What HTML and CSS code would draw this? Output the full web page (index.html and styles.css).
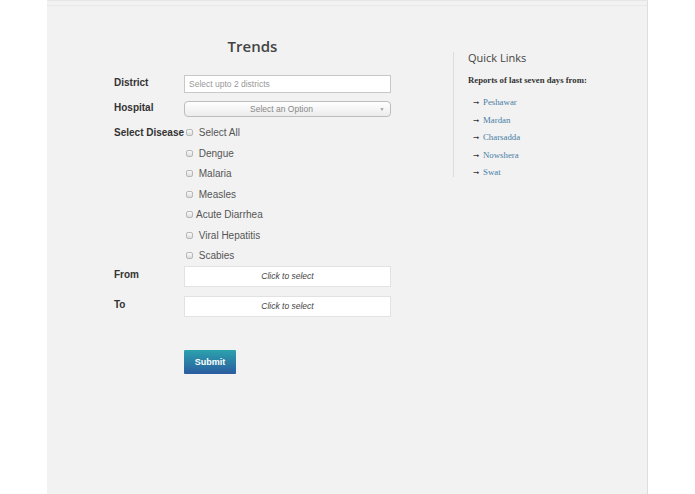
FILE: index.html
```html
<!DOCTYPE html>
<html>
<head>
<meta charset="utf-8">
<link rel="stylesheet" href="styles.css">
</head>
<body>
<div class="panel">
  <div class="panel-top"></div>
  <div class="main">
    <div class="form-col">
      <h1 class="title">Trends</h1>
      <div class="row row-district">
        <div class="lbl">District</div>
        <div class="text-input">Select upto 2 districts</div>
      </div>
      <div class="row row-hospital">
        <div class="lbl lbl-up">Hospital</div>
        <div class="select">
          <span class="select-text">Select an Option</span>
          <span class="select-arrow">&#9660;</span>
        </div>
      </div>
      <div class="row row-disease">
        <div class="lbl lbl-disease">Select Disease</div>
        <div class="options">
          <div class="opt"><span class="cb"></span> Select All</div>
          <div class="opt"><span class="cb"></span> Dengue</div>
          <div class="opt"><span class="cb"></span> Malaria</div>
          <div class="opt"><span class="cb"></span> Measles</div>
          <div class="opt"><span class="cb"></span>Acute Diarrhea</div>
          <div class="opt"><span class="cb"></span> Viral Hepatitis</div>
          <div class="opt"><span class="cb"></span> Scabies</div>
        </div>
      </div>
      <div class="row row-from">
        <div class="lbl lbl-date">From</div>
        <div class="date-input">Click to select</div>
      </div>
      <div class="row row-to">
        <div class="lbl lbl-date">To</div>
        <div class="date-input">Click to select</div>
      </div>
      <div class="submit-row">
        <button class="submit">Submit</button>
      </div>
    </div>
    <div class="links-col">
      <h2 class="links-title">Quick Links</h2>
      <p class="links-sub">Reports of last seven days from:</p>
      <ul class="links">
        <li><span class="arrow">&#10142;</span><a href="#">Peshawar</a></li>
        <li><span class="arrow">&#10142;</span><a href="#">Mardan</a></li>
        <li><span class="arrow">&#10142;</span><a href="#">Charsadda</a></li>
        <li><span class="arrow">&#10142;</span><a href="#">Nowshera</a></li>
        <li><span class="arrow">&#10142;</span><a href="#">Swat</a></li>
      </ul>
    </div>
  </div>
</div>
</body>
</html>
```

FILE: styles.css
```css
html, body {
  margin: 0;
  padding: 0;
  background: #ffffff;
}
body {
  font-family: "Liberation Sans", Arial, sans-serif;
}
.panel {
  margin-left: 47px;
  width: 601px;
  height: 494px;
  background: #f2f2f2;
  border-right: 1px solid #dedede;
  border-top: 1px solid #e6e6e6;
  box-sizing: border-box;
}
.panel-top {
  height: 4px;
  border-bottom: 1px solid #e8e8e8;
}
.main {
  display: flex;
  align-items: flex-start;
}
.form-col {
  padding-left: 67px;
  padding-top: 30px;
  width: 277px;
}
.title {
  margin: 0;
  height: 20px;
  line-height: 20px;
  text-align: center;
  font-family: "Open Sans", sans-serif;
  font-size: 15px;
  font-weight: 600;
  color: #444;
}
.row {
  display: flex;
  align-items: flex-start;
}
.lbl {
  width: 70px;
  flex: none;
  font-size: 10px;
  font-weight: bold;
  color: #333;
  line-height: 14px;
  padding-top: 1px;
  white-space: nowrap;
}
.lbl-up {
  margin-top: -1px;
}
.lbl-date {
  margin-top: 1px;
}
.row-district {
  margin-top: 19px;
}
.text-input {
  width: 207px;
  height: 18px;
  box-sizing: border-box;
  background: #fff;
  border: 1px solid #c8c8c8;
  font-size: 8.5px;
  color: #999;
  line-height: 16px;
  padding-left: 4px;
}
.row-hospital {
  margin-top: 8px;
}
.select {
  width: 207px;
  height: 16px;
  box-sizing: border-box;
  border: 1px solid #bdbdbd;
  border-radius: 4px;
  background: linear-gradient(#ffffff, #ececec);
  display: flex;
  align-items: center;
}
.select-text {
  flex: 1;
  text-align: center;
  font-size: 8.5px;
  color: #888;
  padding-left: 4px;
}
.select-arrow {
  font-size: 5px;
  color: #999;
  width: 16px;
  text-align: center;
}
.row-disease {
  margin-top: 6px;
}
.lbl-disease {
  line-height: 20.5px;
  padding-top: 0;
}
.options {
  padding-left: 2px;
}
.opt {
  height: 20.5px;
  line-height: 20.5px;
  font-size: 10px;
  color: #555;
  white-space: nowrap;
}
.cb {
  display: inline-block;
  width: 5px;
  height: 5px;
  border: 1px solid #b8b8b8;
  border-radius: 2px;
  background: linear-gradient(#fafafa, #dcdcdc);
  margin-right: 3px;
  vertical-align: 0px;
}
.row-from {
  margin-top: -0.5px;
}
.row-to {
  margin-top: 9px;
}
.date-input {
  width: 207px;
  height: 21px;
  box-sizing: border-box;
  background: #fff;
  border: 1px solid #e2e2e2;
  text-align: center;
  font-size: 8.5px;
  font-style: italic;
  color: #444;
  line-height: 19px;
}
.submit-row {
  margin-top: 33px;
  padding-left: 70px;
}
.submit {
  display: block;
  width: 52px;
  height: 24px;
  border: none;
  border-radius: 1px;
  background: linear-gradient(#2ba2ad, #2b5c9f);
  color: #fff;
  font-family: "Liberation Sans", Arial, sans-serif;
  font-size: 9px;
  font-weight: bold;
  padding: 0;
}
.links-col {
  margin-left: 62px;
  margin-top: 46px;
  border-left: 1px solid #dcdcdc;
  padding-left: 14px;
  width: 160px;
  height: 125px;
}
.links-title {
  margin: 0;
  font-family: "Open Sans", sans-serif;
  font-size: 11px;
  font-weight: normal;
  color: #444;
  line-height: 14px;
  margin-top: -1px;
}
.links-sub {
  margin: 9px 0 0;
  font-family: "Liberation Serif", "Times New Roman", serif;
  font-size: 8.7px;
  font-weight: bold;
  color: #333;
  line-height: 12px;
}
.links {
  list-style: none;
  margin: 8px 0 0;
  padding: 0 0 0 5px;
}
.links li {
  height: 17.5px;
  line-height: 17.5px;
  font-family: "Liberation Serif", "Times New Roman", serif;
  font-size: 8.8px;
}
.arrow {
  display: inline-block;
  width: 10px;
  font-family: "DejaVu Sans", sans-serif;
  font-size: 7.5px;
  color: #333;
}
.links a {
  color: #4a7ea6;
  text-decoration: none;
}
```
